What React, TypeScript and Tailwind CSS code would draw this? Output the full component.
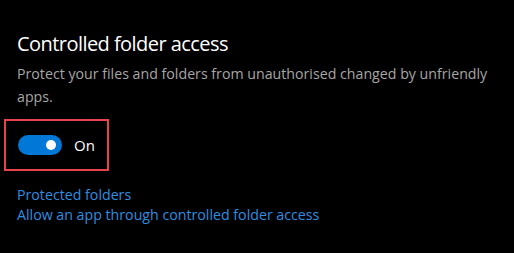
import React from 'react';

export default function App() {
  const [on, setOn] = React.useState(true);

  return (
    <div
      className="w-[514px] h-[253px] bg-black text-white pl-[17px] pt-[31px]"
      style={{ fontFamily: '"Segoe UI", "Open Sans", "Noto Sans", sans-serif' }}
    >
      <h1 className="text-[20px] leading-[26px] font-normal tracking-[-0.55px]">Controlled folder access</h1>
      <p className="mt-[5px] text-[14.2px] leading-[23px] text-[#a6a6a6] w-[492px]">
        Protect your files and folders from unauthorised changed by unfriendly apps.
      </p>

      <div className="mt-[11px] -ml-[13px] w-[105px] h-[52px] border-2 border-[#e8424a] flex items-center pl-[12px] gap-[12px]">
        <button
          onClick={() => setOn(!on)}
          className="w-[44px] h-[20px] rounded-full bg-[#0078d7] flex items-center justify-end pr-[6px]"
        >
          <span className="w-[10px] h-[10px] rounded-full bg-white" />
        </button>
        <span className="text-[15px] leading-[20px]">{on ? 'On' : 'Off'}</span>
      </div>

      <div className="mt-[14px] flex flex-col text-[14.2px] leading-[20px] text-[#2d8fe0]">
        <a href="#">Protected folders</a>
        <a href="#">Allow an app through controlled folder access</a>
      </div>
    </div>
  );
}
